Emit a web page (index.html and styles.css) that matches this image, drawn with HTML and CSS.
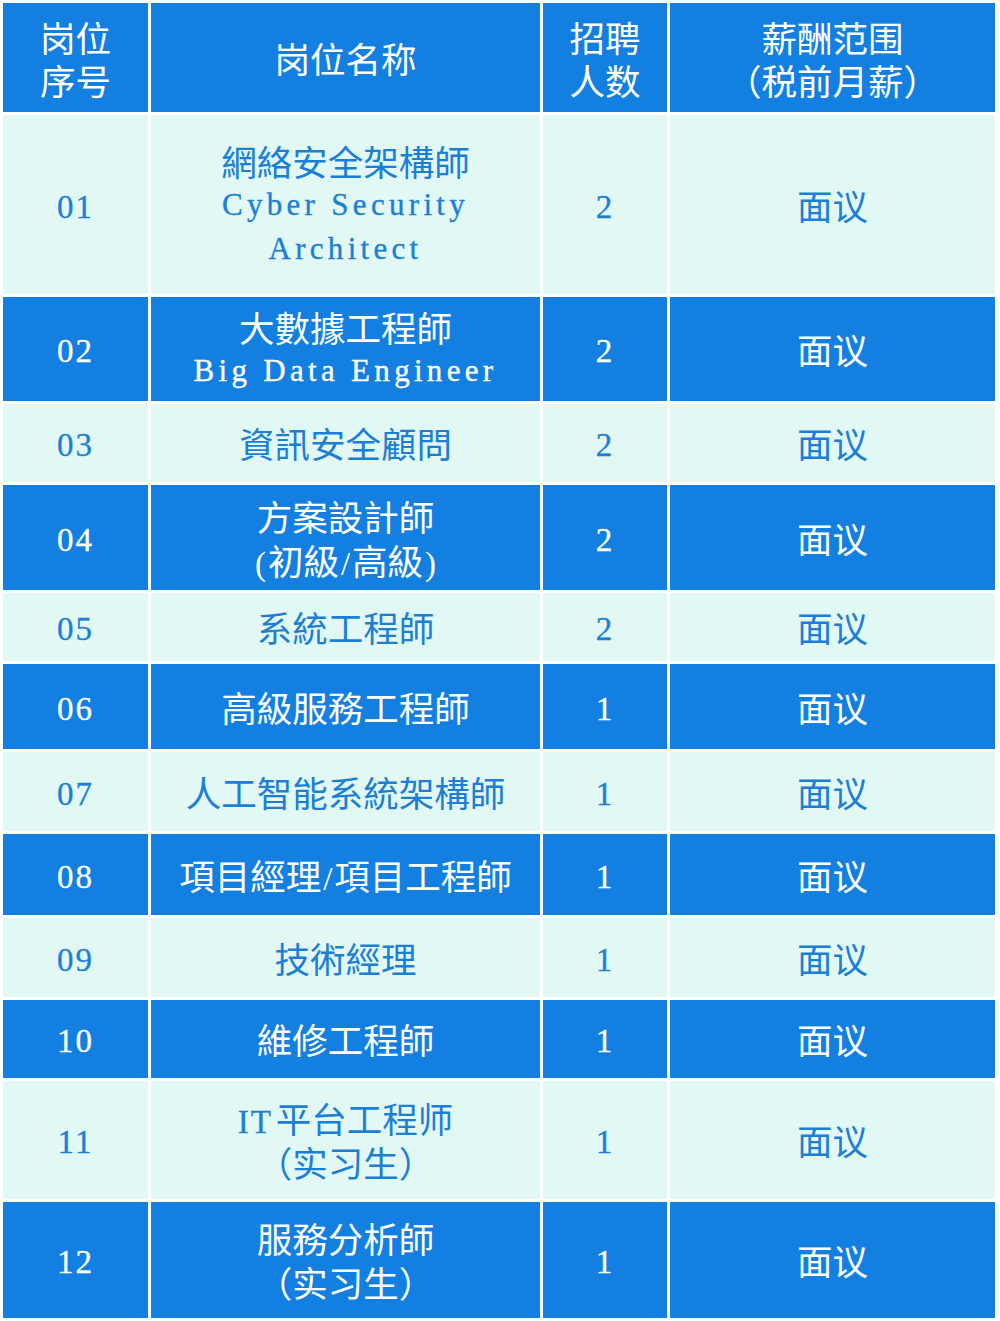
FILE: index.html
```html
<!DOCTYPE html>
<html lang="zh">
<head>
<meta charset="utf-8">
<title>招聘岗位</title>
<link rel="stylesheet" href="styles.css">
</head>
<body>
<table class="jobs">
  <colgroup>
    <col class="c-no"><col class="c-name"><col class="c-num"><col class="c-pay">
  </colgroup>
  <thead>
    <tr class="dark h-head">
      <th><div class="ln">岗位</div><div class="ln">序号</div></th>
      <th><div class="ln">岗位名称</div></th>
      <th><div class="ln">招聘</div><div class="ln">人数</div></th>
      <th><div class="ln">薪酬范围</div><div class="ln">（税前月薪）</div></th>
    </tr>
  </thead>
  <tbody>
    <tr class="light h-r1">
      <td><div class="ln num">01</div></td>
      <td><div class="ln">網絡安全架構師</div><div class="ln en">Cyber Security</div><div class="ln en">Architect</div></td>
      <td><div class="ln num">2</div></td>
      <td><div class="ln">面议</div></td>
    </tr>
    <tr class="dark h-r2">
      <td><div class="ln num">02</div></td>
      <td><div class="ln">大數據工程師</div><div class="ln en">Big Data Engineer</div></td>
      <td><div class="ln num">2</div></td>
      <td><div class="ln">面议</div></td>
    </tr>
    <tr class="light h-r3">
      <td><div class="ln num">03</div></td>
      <td><div class="ln">資訊安全顧問</div></td>
      <td><div class="ln num">2</div></td>
      <td><div class="ln">面议</div></td>
    </tr>
    <tr class="dark h-r4">
      <td><div class="ln num">04</div></td>
      <td><div class="ln">方案設計師</div><div class="ln"><span class="sym">(</span>初級<span class="sym">/</span>高級<span class="sym">)</span></div></td>
      <td><div class="ln num">2</div></td>
      <td><div class="ln">面议</div></td>
    </tr>
    <tr class="light h-r5">
      <td><div class="ln num">05</div></td>
      <td><div class="ln">系統工程師</div></td>
      <td><div class="ln num">2</div></td>
      <td><div class="ln">面议</div></td>
    </tr>
    <tr class="dark h-r6">
      <td><div class="ln num">06</div></td>
      <td><div class="ln">高級服務工程師</div></td>
      <td><div class="ln num">1</div></td>
      <td><div class="ln">面议</div></td>
    </tr>
    <tr class="light h-r7">
      <td><div class="ln num">07</div></td>
      <td><div class="ln">人工智能系統架構師</div></td>
      <td><div class="ln num">1</div></td>
      <td><div class="ln">面议</div></td>
    </tr>
    <tr class="dark h-r8">
      <td><div class="ln num">08</div></td>
      <td><div class="ln">項目經理<span class="sym">/</span>項目工程師</div></td>
      <td><div class="ln num">1</div></td>
      <td><div class="ln">面议</div></td>
    </tr>
    <tr class="light h-r9">
      <td><div class="ln num">09</div></td>
      <td><div class="ln">技術經理</div></td>
      <td><div class="ln num">1</div></td>
      <td><div class="ln">面议</div></td>
    </tr>
    <tr class="dark h-r10">
      <td><div class="ln num">10</div></td>
      <td><div class="ln">維修工程師</div></td>
      <td><div class="ln num">1</div></td>
      <td><div class="ln">面议</div></td>
    </tr>
    <tr class="light h-r11">
      <td><div class="ln num">11</div></td>
      <td><div class="ln"><span class="sym it">IT</span>平台工程师</div><div class="ln">（实习生）</div></td>
      <td><div class="ln num">1</div></td>
      <td><div class="ln">面议</div></td>
    </tr>
    <tr class="dark h-r12">
      <td><div class="ln num">12</div></td>
      <td><div class="ln">服務分析師</div><div class="ln">（实习生）</div></td>
      <td><div class="ln num">1</div></td>
      <td><div class="ln">面议</div></td>
    </tr>
  </tbody>
</table>
</body>
</html>
```

FILE: styles.css
```css
html, body {
  margin: 0;
  padding: 0;
  background: #ffffff;
}

.jobs {
  border-collapse: separate;
  border-spacing: 3px;
  table-layout: fixed;
  width: 998px;
  font-family: "Noto Sans CJK SC", "Noto Sans CJK TC", sans-serif;
  font-size: 35.5px;
}

.c-no { width: 145px; }
.c-name { width: 389px; }
.c-num { width: 124px; }
.c-pay { width: 325px; }

.jobs th,
.jobs td {
  padding: 0;
  text-align: center;
  vertical-align: middle;
  font-weight: 400;
  white-space: nowrap;
  overflow: hidden;
}

.ln {
  display: block;
  height: 44px;
  line-height: 44px;
}

.jobs th .ln {
  height: 43px;
  line-height: 43px;
}

.dark th,
.dark td {
  background: #127fe1;
  color: #ffffff;
}

.light td {
  background: #e2f8f5;
  color: #1b7fd6;
}

.num {
  font-family: "Liberation Serif", "Times New Roman", serif;
  font-size: 33px;
  letter-spacing: 2px;
  padding-top: 4px;
  height: 40px;
  line-height: 40px;
  -webkit-text-stroke: 0.3px currentColor;
}

.en {
  font-family: "Liberation Serif", "Times New Roman", serif;
  font-size: 31px;
  letter-spacing: 4.3px;
  -webkit-text-stroke: 0.35px currentColor;
}

.sym {
  font-family: "Liberation Serif", "Times New Roman", serif;
  font-size: 33px;
  padding: 0 2px;
}

.it {
  letter-spacing: 2px;
  padding: 0 3px 0 0;
  -webkit-text-stroke: 0.3px currentColor;
}

.h-head { height: 109px; }
.h-r1 { height: 179px; }
.h-r2 { height: 104px; }
.h-r3 { height: 78px; }
.h-r4 { height: 105px; }
.h-r5 { height: 68px; }
.h-r6 { height: 85px; }
.h-r7 { height: 79px; }
.h-r8 { height: 81px; }
.h-r9 { height: 79px; }
.h-r10 { height: 78px; }
.h-r11 { height: 118px; }
.h-r12 { height: 116px; }
```
